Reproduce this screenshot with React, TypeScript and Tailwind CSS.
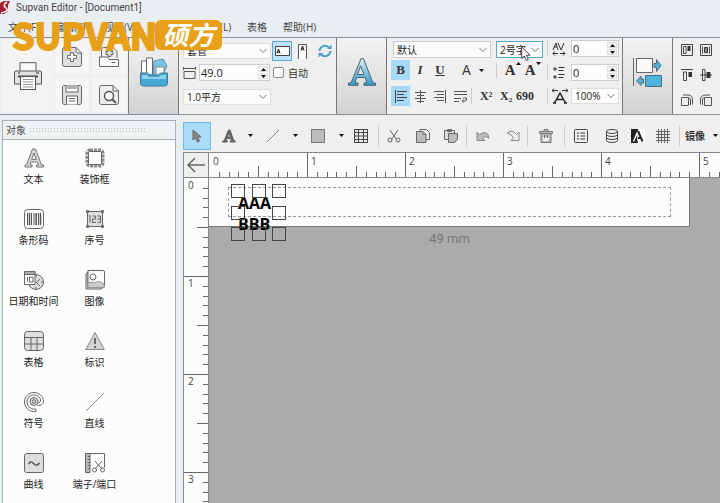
import type { ReactNode } from "react";

type IconProps = { children: ReactNode; box?: string; className?: string };

const Icon = ({ children, box = "0 0 20 20", className = "size-5" }: IconProps) => (
  <svg viewBox={box} fill="none" stroke="#666" className={`shrink-0 ${className}`} aria-hidden="true">
    {children}
  </svg>
);

const Chevron = () => (
  <svg viewBox="0 0 8 5" fill="none" stroke="#777" className="pointer-events-none absolute right-1 top-1/2 h-[5px] w-2 -translate-y-1/2">
    <path d="M.5 .5 4 4 7.500 .5" />
  </svg>
);

const Caret = () => (
  <svg viewBox="0 0 5 3" fill="#111" className="h-[3px] w-[5px] shrink-0">
    <path d="M0 0h5L2.500 3z" />
  </svg>
);

const CaretUp = () => (
  <svg viewBox="0 0 5 3" fill="#111" className="h-[3px] w-[5px] shrink-0">
    <path d="M0 3h5L2.500 0z" />
  </svg>
);

type SelectProps = { label: string; value: string; className: string };

const Select = ({ label, value, className }: SelectProps) => (
  <div className={`relative shrink-0 ${className}`}>
    <select aria-label={label} className="block h-full w-full appearance-none border border-inherit bg-[#fcfcfc] pl-[3px] text-[10px] leading-3 text-[#222]">
      <option>{value}</option>
    </select>
    <Chevron />
  </div>
);

type SpinProps = { label: string; value: string; className: string };

const Spin = ({ label, value, className }: SpinProps) => (
  <div className={`flex h-[17px] shrink-0 border border-[#ccc] bg-[#fcfcfc] ${className}`}>
    <input aria-label={label} defaultValue={value} className="min-w-0 flex-1 bg-transparent pl-px text-[11px] leading-3 text-[#222]" />
    <div className="flex w-3 flex-col gap-px p-px">
      <button aria-label={`${label} +`} className="flex flex-1 items-center justify-center border border-[#ddd] bg-[#f2f2f2]">
        <CaretUp />
      </button>
      <button aria-label={`${label} -`} className="flex flex-1 items-center justify-center border border-[#ddd] bg-[#f2f2f2]">
        <Caret />
      </button>
    </div>
  </div>
);

const objects: { name: string; icon: ReactNode }[] = [
  {
    name: "文本",
    icon: <path d="M8.500 1h3l6 16h2v2h-7v-2h2l-1-3H7l-1 3h2v2H1v-2h1.500zM10 5l-2.300 6.500h4.500z" fill="#d4d4d4" stroke="#777" />,
  },
  {
    name: "装饰框",
    icon: (
      <>
        <rect x="2" y="2" width="16" height="16" rx="3" strokeWidth="3" strokeDasharray="3 1" stroke="#888" />
        <rect x="3.500" y="3.500" width="13" height="13" rx="1" fill="#fcfcfc" />
      </>
    ),
  },
  {
    name: "条形码",
    icon: (
      <>
        <rect x=".5" y=".5" width="19" height="19" rx="3" />
        <path d="M3.500 4v12M7.500 4v12M10 4v12M14.500 4v12" stroke="#555" />
        <path d="M5.500 4v12M12.200 4v12M16.500 4v12" strokeWidth="1.500" stroke="#555" />
      </>
    ),
  },
  {
    name: "序号",
    icon: (
      <>
        <path d="M2.500 2.500h15v15h-15z" fill="#ddd" />
        <path d="M1 1h3v3H1zM16 1h3v3h-3zM1 16h3v3H1zM16 16h3v3h-3z" fill="#777" stroke="none" />
        <path d="M4 7l1-.5v7M7.500 7h3v3h-3v3.500h3.500M12.500 7h3v6.500h-3M12.500 10h3" />
      </>
    ),
  },
  {
    name: "日期和时间",
    icon: (
      <>
        <circle cx="12" cy="12" r="7.500" fill="#ddd" />
        <path d="M12 5v2M19 12h-2M12 19v-2M12 13l4-4M12 12l4 4" />
        <path d="M.5 2.500h10.500v12H.5z" fill="#fcfcfc" />
        <path d="M.5 1.500h10.500v3H.5z" fill="#aaa" />
        <path d="M3.500 7v5M5.500 7h3.500v5H5.500z" />
      </>
    ),
  },
  {
    name: "图像",
    icon: (
      <>
        <path d="M3 1.500L1 4v15h15l2-1.500H3z" fill="#ddd" />
        <path d="M3 .5h15q1.500 0 1.500 1.500v14q0 1.500-1.500 1.500H3z" fill="#fcfcfc" />
        <path d="M3 13q3-2 6 0 5-3 10 1v3.500H3z" fill="#ccc" stroke="#999" />
        <circle cx="8" cy="7" r="3" />
      </>
    ),
  },
  {
    name: "表格",
    icon: (
      <>
        <rect x=".5" y=".5" width="19" height="19" rx="3" fill="#ddd" />
        <path d="M.5 6.500h19M.5 13h19M7 6.500v13M13 6.500v13" />
      </>
    ),
  },
  {
    name: "标识",
    icon: (
      <>
        <path d="M10 1.500 19.300 18.500H.7z" fill="#d4d4d4" stroke="#888" />
        <path d="M10 7v6M10 15v2" strokeWidth="1.500" stroke="#444" />
      </>
    ),
  },
  {
    name: "符号",
    icon: (
      <>
        <path
          d="M12 19.500C6 20.500.5 16 .5 10 .5 4.500 5 .5 10 .5s9.500 4 9.500 8.500c0 4-5 6-7 3.500 M12 17c-4 .8-9-2-9-7 0-4 3-7 7-7s7 3 6.500 6c0 1.500-2 2-2 .5M12 17v2.500"
        />
        <circle cx="10" cy="9.500" r="4" fill="#ddd" />
        <circle cx="10" cy="9.500" r="1.800" />
      </>
    ),
  },
  { name: "直线", icon: <path d="M1 19 19 1" stroke="#888" /> },
  {
    name: "曲线",
    icon: (
      <>
        <rect x=".5" y=".5" width="19" height="19" rx="2" fill="#ddd" />
        <path d="M4.500 11c2-3 3.500-2 5-.5s3.500 3 6-.5" strokeWidth="1.500" stroke="#555" />
      </>
    ),
  },
  {
    name: "端子/端口",
    icon: (
      <>
        <path d="M.5 .5h4.500v19H.5z" fill="#bbb" />
        <path d="M2.500 3.500H5M2.500 6.500H5M2.500 9.500H5M2.500 12.500H5M2.500 15.500H5M5 .5h14.500v14M10 8l6.500 7.500M17 8l-6.500 7.500" />
        <circle cx="9.500" cy="17" r="2" />
        <circle cx="17.500" cy="17" r="2" />
      </>
    ),
  },
];

const fileButtons: { name: string; icon: ReactNode }[] = [
  {
    name: "新建",
    icon: (
      <>
        <path d="M3 .5h11l5.500 5.500v11.500q0 2-2 2H2.500q-2 0-2-2V2.500q0-2 2-2zM14 .5v3.500q0 2 2 2h3.500" fill="#ddd" />
        <path d="M8.500 5.500h3v3h3v3h-3v3h-3v-3h-3v-3h3z" fill="#fff" />
      </>
    ),
  },
  {
    name: "打开",
    icon: (
      <>
        <path d="M2.500 10V2.500q0-2 2-2H14l4 4V11" fill="#eee" />
        <path d="M.5 10h8l1.500 2.500h9.500v7H.5z" fill="#fafafa" />
        <path d="M9 2.500h3v2h2v3h-2v2H9v-2H7v-3h2zM12.500 15.500h4" fill="#ddd" />
      </>
    ),
  },
  {
    name: "保存",
    icon: (
      <>
        <path d="M1.500 .5h17l1 1v16q0 2-2 2h-15q-2 0-2-2v-16z" fill="#ddd" />
        <path d="M4 .5V7h12V.5M4.500 19.500V11h11v8.500" fill="#fafafa" />
        <path d="M6 1v3M8 1v3M10 1v3M12 1v3M14 1v3M7 13.500h6M7 16h6" />
      </>
    ),
  },
  {
    name: "预览",
    icon: (
      <>
        <path d="M3 .5h11l5.500 5.500v11.500q0 2-2 2H2.500q-2 0-2-2V2.500q0-2 2-2zM14 .5V6h5.500" fill="#eee" />
        <circle cx="10" cy="11" r="4.500" fill="#fcfcfc" strokeWidth="1.500" stroke="#555" />
        <path d="M13.500 14.500 17 18" strokeWidth="2" stroke="#555" />
      </>
    ),
  },
];

const alignIcons: { name: string; icon: ReactNode }[] = [
  {
    name: "顶部对齐",
    icon: (
      <>
        <path d="M.5 .5h11v11H.5zM2.500 2.500h2.500v7H2.500z" stroke="#444" />
        <path d="M6.500 2h3v5h-3z" fill="#333" stroke="none" />
      </>
    ),
  },
  {
    name: "居中对齐",
    icon: (
      <>
        <path d="M.5 .5h11v11H.5zM2.500 2.500v7M9.500 2.500v7" stroke="#444" />
        <path d="M4.500 3.500h3v5h-3z" fill="#888" stroke="#333" />
      </>
    ),
  },
  {
    name: "上边对齐",
    icon: (
      <>
        <path d="M0 .5h12M2.500 3h3v8.500h-3z" stroke="#444" />
        <path d="M7.500 3H11v5H7.500z" fill="#333" stroke="none" />
      </>
    ),
  },
  {
    name: "中线对齐",
    icon: (
      <>
        <path d="M0 6h12M2.500 .5h2.500v11H2.500z" fill="#efefef" stroke="#444" />
        <path d="M6.500 3h4v6h-4z" fill="#333" stroke="none" />
      </>
    ),
  },
  { name: "左旋转", icon: <path d="M.5 3.500h7v8h-7zM2 1h5q4.500 0 4.500 5v4.500M7.500 3.500l2 1.500v6" stroke="#555" /> },
  { name: "右旋转", icon: <path d="M4.500 3.500h7v8h-7zM10 1H6Q.5 1 .5 6v4.500M4.500 3.500l-2 1.500v6" stroke="#555" /> },
];

const Ribbon = () => (
  <section className="flex h-[78px] shrink-0 items-stretch overflow-hidden border-y border-[#8d8f91] bg-[#efefef]">
    <div className="flex w-[129px] shrink-0 gap-[2px] border-r border-[#777] px-[2px] pb-[2px] pt-px">
      <button aria-label="打印" className="flex w-[51px] items-center justify-center bg-[#f3f3f3]">
        <Icon box="0 0 28 28" className="size-7">
          <path d="M6 9V.7h16V9" fill="#fafafa" stroke="#555" />
          <path d="M2 9h24q1.500 0 1.500 2v11h-27V11Q.5 9 2 9z" fill="#e3e3e3" stroke="#555" />
          <path d="M4 14.500h20" stroke="#444" strokeWidth="2" />
          <path d="M6.500 14.500h15v13h-15z" fill="#fcfcfc" stroke="#555" />
          <path d="M9 17.500h10M9 20h10M9 22.500h10M9 25h10" stroke="#999" />
          <path d="M4 11h2M22 11h3" stroke="#333" />
        </Icon>
      </button>
      <div className="grid flex-1 grid-cols-2 gap-[3px]">
        {fileButtons.map((b) => (
          <button key={b.name} aria-label={b.name} className="flex items-center justify-center bg-[#f5f5f5]">
            <Icon>{b.icon}</Icon>
          </button>
        ))}
      </div>
    </div>

    <button aria-label="素材" className="flex w-[50px] shrink-0 items-center justify-center border-r border-[#777] bg-linear-to-b from-[#f3f3f3] to-[#d2d2d2] pb-2">
      <Icon box="0 0 28 30" className="h-[30px] w-7">
        <path d="M14 4 23 2l4 7-4 8H13z" fill="#7cc3e0" stroke="#5b94ad" />
        <path d="M1.500 4h5v14h-5zM6.500 1h6v17h-6z" fill="#fcfcfc" />
        <path d="M16 10h8v8h-8z" fill="#fcfcfc" stroke="#888" />
        <path d="M.5 16h7l2 2h9l2-2h7v10q0 3-3 3h-21q-3 0-3-3z" fill="#47a9d3" stroke="#397fa0" />
        <path d="M2 18h5l2 2h10l2-2h5v4H2z" fill="#8fd0ea" stroke="none" />
      </Icon>
    </button>

    <div className="flex w-[158px] shrink-0 flex-col gap-[3px] border-r border-[#777] pl-1 pt-[3px]">
      <div className="flex items-center">
        <Select label="套管" value="套管" className="mr-px h-4 w-[88px] border-[#ddd]" />
        <button aria-label="横向" className="flex size-5 items-center justify-center border border-[#5aa9dc] bg-[#bfe2fa]">
          <Icon box="0 0 15 10" className="h-[10px] w-[15px]">
            <path d="M.5 .5h14v9H.5z" fill="#fcfcfc" stroke="#444" />
            <path d="M2 7.500 3.500 3 5 7.500M2.500 6h2" stroke="#111" />
          </Icon>
        </button>
        <button aria-label="纵向" className="flex size-5 items-center justify-center">
          <Icon box="0 0 9 15" className="h-[15px] w-[9px]">
            <path d="M.5 15V.5h8V15" fill="#fcfcfc" stroke="#555" />
            <path d="M3 6.500 4.500 2 6 6.500M3.500 5h2" stroke="#111" />
          </Icon>
        </button>
        <button aria-label="刷新" className="ml-[3px] flex size-5 items-center justify-center">
          <Icon box="0 0 14 14" className="size-[14px]">
            <path d="M1.500 7A5.500 5.500 0 0 1 11 3.500M12.500 7A5.500 5.500 0 0 1 3 10.500" stroke="#4a9fc8" strokeWidth="2" />
            <path d="M9 5h4.500V.5zM5 9H.5v4.500z" fill="#4a9fc8" stroke="none" />
          </Icon>
        </button>
      </div>
      <div className="flex items-center gap-[3px]">
        <Icon box="0 0 13 12" className="h-3 w-[13px]">
          <path d="M1 4.500h11v7H1zM.5 0v3M12.500 0v3M1 1.500h11" stroke="#555" />
        </Icon>
        <Spin label="长度" value="49.0" className="w-[71px]" />
        <label className="flex items-center gap-1 text-[10px] leading-3">
          <input type="checkbox" className="size-[11px] appearance-none rounded-[2px] border border-[#888] bg-[#fcfcfc]" />
          自动
        </label>
      </div>
      <Select label="线径" value="1.0平方" className="mt-[5px] h-4 w-[88px] border-[#ddd]" />
    </div>

    <button aria-label="字体" className="flex w-[50px] shrink-0 items-center justify-center border-r border-[#777] bg-linear-to-b from-[#f3f3f3] to-[#d2d2d2] pb-2">
      <Icon box="0 0 28 28" className="size-7">
        <defs>
          <linearGradient id="letter" x1="0" y1="0" x2="0" y2="1">
            <stop offset="0" stopColor="#d5eef8" />
            <stop offset="1" stopColor="#2f9ccb" />
          </linearGradient>
        </defs>
        <path d="M13 .7h2.500L25 25h2.500v2.300H16V25h3l-2-5.500H8.500L7 25h3v2.300H.5V25H3zM12.500 8 9.500 16.500h6.500z" fill="url(#letter)" stroke="#4b6470" />
      </Icon>
    </button>

    <div className="flex w-[160px] shrink-0 flex-col gap-[2px] pl-1 pt-[3px]">
      <div className="flex gap-[5px] pl-[2px]">
        <Select label="字体名称" value="默认" className="h-[17px] w-[98px] border-[#ccc]" />
        <Select label="字号" value="2号字" className="h-[17px] w-[47px] border-[#55a7d5]" />
      </div>
      <div className="flex items-center font-['Liberation_Serif',serif] text-[13px] font-bold leading-4 text-[#333]">
        <button className="h-5 w-[19px] bg-[#a9d9f8]">B</button>
        <button className="w-5 italic">I</button>
        <button className="w-5 underline">U</button>
        <button className="ml-3 flex items-center gap-2 font-['Open_Sans',sans-serif] text-[14px] font-normal">
          A
          <Caret />
        </button>
        <span className="ml-3 h-4 w-px bg-[#ccc]" />
        <button aria-label="增大字号" className="ml-2 flex items-start text-[15px]">
          A
          <CaretUp />
        </button>
        <button aria-label="减小字号" className="ml-1 flex items-start text-[15px]">
          A
          <Caret />
        </button>
      </div>
      <div className="mt-1 flex items-center font-['Liberation_Serif',serif] text-[12px] font-bold leading-4 text-[#333]">
        <button aria-label="左对齐" className="flex h-5 w-[19px] items-center justify-center bg-[#a9d9f8]">
          <Icon box="0 0 13 13" className="size-[13px]">
            <path d="M1.500 0v13M3 1.500h10M3 4.500h7M3 7.500h10M3 10.500h7" stroke="#444" />
          </Icon>
        </button>
        <button aria-label="居中" className="flex w-5 justify-center">
          <Icon box="0 0 13 13" className="size-[13px]">
            <path d="M6.500 0v13M1 2.500h11M3 5.500h7M1 8.500h11M3 11.500h7" stroke="#555" />
          </Icon>
        </button>
        <button aria-label="右对齐" className="flex w-5 justify-center">
          <Icon box="0 0 13 13" className="size-[13px]">
            <path d="M11.500 0v13M0 1.500h10M3 4.500h7M0 7.500h10M3 10.500h7" stroke="#555" />
          </Icon>
        </button>
        <button aria-label="换行" className="flex w-5 justify-center">
          <Icon box="0 0 13 13" className="size-[13px]">
            <path d="M0 1.500h13M0 4.500h13M0 8.500h7M0 11.500h5M8 11h3q2 0 1.500-3H9M9.500 9.500 8 11l1.500 1.500" stroke="#555" />
          </Icon>
        </button>
        <span className="ml-px h-4 w-px bg-[#ccc]" />
        <button className="ml-2 w-3 text-left">X²</button>
        <button className="ml-2 w-3 text-left">X₂</button>
        <button className="ml-1">690</button>
      </div>
    </div>

    <div className="flex w-[76px] shrink-0 flex-col gap-[7px] border-r border-[#777] pt-[2px]">
      <div className="flex items-center justify-between border-l border-[#ccc] pl-1 pr-[3px]">
        <Icon box="0 0 14 14" className="size-[14px]">
          <path d="M1 8 4 1l2 7M2 5h3M6 1l3 7 3-7M1 11.500h5M8 11.500h5M3 9.500l-2 2 2 2M11 9.500l2 2-2 2" stroke="#333" />
        </Icon>
        <Spin label="字间距" value="0" className="w-12" />
      </div>
      <div className="flex items-center justify-between border-l border-[#ccc] pl-1 pr-[3px]">
        <Icon box="0 0 14 14" className="size-[14px]">
          <path d="M3 1v4M1 3h4M3 9v4M1 11h4M6.500 1.500h6M6.500 4.500h5M6.500 8.500h6M6.500 11.500h5" stroke="#333" />
        </Icon>
        <Spin label="行间距" value="0" className="w-12" />
      </div>
      <div className="flex items-center justify-between border-l border-[#ccc] pl-1 pr-[3px]">
        <Icon box="0 0 16 16" className="size-4">
          <path d="M0 2.500h6M10 2.500h6M2 .5l-2 2 2 2M14 .5l2 2-2 2" stroke="#333" />
          <path d="M1 15h3M12 15h3M2.500 15 8 5l5.500 10M5 11.500h6" stroke="#222" strokeWidth="1.500" />
        </Icon>
        <Select label="缩放" value="100%" className="h-4 w-12 border-[#ddd]" />
      </div>
    </div>

    <button aria-label="交换" className="flex w-[50px] shrink-0 items-center justify-center border-r border-[#777] bg-linear-to-b from-[#f3f3f3] to-[#d2d2d2] pb-2">
      <Icon box="0 0 29 30" className="h-[30px] w-[29px]">
        <path d="M.5 1v28" />
        <path d="M3.500 1.500h16v14h-16z" fill="#fafafa" />
        <path d="M12.500 18.500h16v11h-16z" fill="#4db2dc" stroke="#456d7e" />
        <path d="M21 6.500h2.500v-4l4.500 6-4.500 6v-4H21zM10.500 22H8v-3l-4.500 5L8 28.500V26h2.500z" fill="#55b3da" stroke="#456d7e" />
      </Icon>
    </button>

    <div className="grid shrink-0 grid-cols-[12px_12px] content-around gap-x-[7px] pb-[2px] pl-2">
      {alignIcons.map((a) => (
        <button key={a.name} aria-label={a.name}>
          <Icon box="0 0 12 12" className="size-3">{a.icon}</Icon>
        </button>
      ))}
    </div>
  </section>
);

const Divider = () => <span className="h-[22px] w-px shrink-0 bg-[#ccc]" />;

type ToolProps = { name: string; children: ReactNode; className?: string };

const Tool = ({ name, children, className = "w-7" }: ToolProps) => (
  <button aria-label={name} className={`flex h-7 shrink-0 items-center justify-center ${className}`}>
    <Icon box="0 0 14 14" className="size-[14px]">{children}</Icon>
  </button>
);

const ToolMenu = ({ name }: { name: string }) => (
  <button aria-label={name} className="flex h-7 w-[6px] shrink-0 items-center justify-center">
    <Caret />
  </button>
);

const Toolbar = () => (
  <div className="flex h-[35px] shrink-0 items-center overflow-hidden bg-[#efefef] pt-[2px]">
    <Tool name="选择" className="w-7 border border-[#6dbce9] bg-[#addcfa]">
      <path d="M3 1v10l2.500-2 2 4 2-1-2-4H11z" fill="#888" />
    </Tool>
    <Tool name="文本" className="w-9">
      <path d="M6.500 1h1.500l4 11h1.500v1H8v-1h1.500l-.8-2.500H5L4 12h1.500v1H.5v-1H2zM6.800 4 5.500 8h3z" fill="#666" />
    </Tool>
    <ToolMenu name="文本选项" />
    <Tool name="直线" className="w-[39px]"><path d="M1 13 13 1" stroke="#888" /></Tool>
    <ToolMenu name="直线选项" />
    <Tool name="矩形" className="w-10"><path d="M.5 .5h13v13H.5z" fill="#bbb" stroke="#777" /></Tool>
    <ToolMenu name="矩形选项" />
    <Tool name="表格" className="w-[34px]">
      <path d="M.5 .5h13v13H.5zM4.500 .5v13M9.500 .5v13M.5 3.500h13M.5 7h13M.5 10.500h13" stroke="#444" />
    </Tool>
    <Divider />
    <Tool name="剪切" className="w-[30px]">
      <path d="m3 1 6.500 9.500M11 1 4.500 10.500" />
      <circle cx="3" cy="11" r="2" />
      <circle cx="11" cy="11" r="2" />
    </Tool>
    <Tool name="复制">
      <path d="M4 .5h6.500l3 3v7H4z" fill="#eee" />
      <path d="M.5 2.500H7l3 3v8H.5zM7 2.500v3h3" fill="#bbb" />
    </Tool>
    <Tool name="粘贴">
      <path d="M.5 1.500h10v9H.5zM3.500 .5h4v2h-4z" fill="#ddd" />
      <path d="M4.500 4.500h9v6l-3 3h-6z" fill="#bbb" />
    </Tool>
    <span className="w-px shrink-0" />
    <Divider />
    <Tool name="撤销" className="w-8">
      <path d="M1 3v8.500h8L6.500 9Q9 6 13 9.500 12 0 3.500 5.500z" fill="#bbb" stroke="#888" />
    </Tool>
    <Tool name="重做">
      <path d="M13 3v8.500H5L7.500 9Q6 5 1 4 6 0 10.500 5.500z" fill="#eee" stroke="#888" />
    </Tool>
    <Divider />
    <Tool name="删除" className="w-9">
      <path d="M.5 2.500h13v2H.5zM5 .5h4v2H5zM2 4.500h10v9H2z" fill="#bbb" stroke="#777" />
      <path d="M4 8h6v4H4z" fill="#eee" stroke="none" />
      <path d="M5.500 6v3M8.500 6v3" />
    </Tool>
    <Divider />
    <Tool name="属性" className="w-8">
      <rect x=".5" y=".5" width="13" height="13" rx="1" stroke="#444" />
      <path d="M3 4h2M3 7h2M3 10h2M6.500 4H11M6.500 7H11M6.500 10H11" stroke="#333" />
    </Tool>
    <Tool name="数据库" className="w-[30px]">
      <path d="M1.500 2.500v9q0 2 5.500 2t5.500-2v-9M1.500 5.500q0 2 5.500 2t5.500-2M1.500 8.500q0 2 5.500 2t5.500-2" stroke="#444" />
      <ellipse cx="7" cy="2.500" rx="5.500" ry="2" stroke="#444" />
    </Tool>
    <Tool name="反色" className="w-[22px]">
      <path d="M7 0h7v14H7z" fill="#fff" stroke="none" />
      <path d="M0 0h7v14H0z" fill="#222" stroke="none" />
      <path d="M2.500 12.500 7 2v10.500" stroke="#fff" strokeWidth="1.500" />
      <path d="M7 2l4.500 10.500M7 9h3" stroke="#222" strokeWidth="2" />
    </Tool>
    <Tool name="网格" className="mr-[2px] w-7">
      <path d="M2.500 0v14M5.500 0v14M8.500 0v14M11.500 0v14M0 2.500h14M0 5.500h14M0 8.500h14M0 11.500h14" />
    </Tool>
    <Divider />
    <button className="ml-[5px] flex shrink-0 items-center gap-2 text-[10px] font-bold leading-3 text-[#333]">
      镜像
      <Caret />
    </button>
  </div>
);

const ticks = [0, 1, 2, 3, 4, 5, 6, 7, 8, 9];

const RulerX = () => (
  <div className="flex min-w-0 flex-1 overflow-hidden border-b border-[#888] bg-[#fcfcfc]">
    {[0, 1, 2, 3, 4, 5].map((n) => (
      <div key={n} className="relative flex w-[98px] shrink-0 items-end">
        {ticks.map((t) => (
          <span
            key={t}
            className={`flex-1 border-l border-[#666] ${t === 0 ? (n === 0 ? "h-0" : "h-6") : t === 5 ? "h-[11px]" : "h-[5px]"}`}
          />
        ))}
        <span className="absolute left-1 top-[2px] text-[10px] leading-3 text-[#444]">{n}</span>
      </div>
    ))}
  </div>
);

const RulerY = () => (
  <div className="flex w-[26px] shrink-0 flex-col overflow-hidden border-x border-[#888] bg-[#fcfcfc]">
    {[0, 1, 2, 3].map((n) => (
      <div key={n} className="relative flex h-[98px] shrink-0 flex-col items-end">
        {ticks.map((t) => (
          <span
            key={t}
            className={`flex-1 border-t border-[#666] ${t === 0 ? (n === 0 ? "w-0" : "w-6") : t === 5 ? "w-[11px]" : "w-[5px]"}`}
          />
        ))}
        <span className="absolute left-1 top-px text-[10px] leading-3 text-[#444]">{n}</span>
      </div>
    ))}
  </div>
);

const handles = [
  "left-[22px] top-[6px]",
  "left-[43px] top-[6px]",
  "left-[63px] top-[6px]",
  "left-[22px] top-[28px]",
  "left-[63px] top-[28px]",
  "left-[22px] top-[49px]",
  "left-[43px] top-[49px]",
  "left-[63px] top-[49px]",
];

const Canvas = () => (
  <div className="relative min-w-0 flex-1 overflow-hidden bg-[#ababab]">
    <div className="h-[49px] w-[481px] border-b border-r border-[#777] bg-[#fcfcfc] pb-[9px] pl-[19px] pr-[18px] pt-[9px]">
      <div className="h-full border border-dashed border-[#999]" />
    </div>
    <p className="w-[481px] pt-[3px] text-center font-['Roboto',sans-serif] text-[13px] leading-[18px] text-[#777]">49 mm</p>
    <div className="absolute left-[29px] top-[15px] font-['Open_Sans',sans-serif] text-[16px] font-bold leading-[21px] text-black">
      AAA
      <br />
      BBB
    </div>
    {handles.map((h) => (
      <span key={h} className={`absolute size-[14px] border border-[#444] ${h}`} />
    ))}
  </div>
);

const ObjectPanel = () => (
  <aside className="ml-[2px] mt-[5px] flex w-[174px] shrink-0 flex-col border border-b-0 border-[#a9b0b5]">
    <h2 className="flex h-[19px] shrink-0 items-center gap-[3px] border-b border-[#a9b0b5] bg-[#eef2f3] pl-[3px] text-[10px] leading-3 text-[#444]">
      对象
      <span className="h-[6px] w-[116px] bg-[radial-gradient(#bbb_1px,transparent_1px)] bg-[size:3px_3px]" />
    </h2>
    <div className="grid min-h-0 flex-1 auto-rows-[61px] grid-cols-[61px_61px] content-start overflow-hidden bg-[#fcfcfc] pt-[6px]">
      {objects.map((o) => (
        <button key={o.name} className="flex flex-col items-center gap-[5px] pt-[2px] text-[10px] leading-3 text-[#222]">
          <Icon>{o.icon}</Icon>
          <span className="whitespace-nowrap">{o.name}</span>
        </button>
      ))}
    </div>
  </aside>
);

const App = () => {
  return (
    <div className="relative flex h-screen flex-col overflow-hidden bg-[#e9eef1] font-['Open_Sans','Noto_Sans_CJK_SC',sans-serif] text-[#333]">
      <header className="flex h-4 shrink-0 items-center gap-[5px] text-[10px] leading-4 text-[#444]">
        <Icon box="0 0 11 14" className="h-[14px] w-[11px]">
          <path d="M0 2 4 0h6L8 4v6l-4 3H0z" fill="#a71d2e" stroke="none" />
          <path d="M7 1Q2 4 6 7t-5 5" stroke="#fff" strokeWidth="1.500" />
        </Icon>
        <h1 className="font-['Roboto',sans-serif]">Supvan Editor - [Document1]</h1>
      </header>
      <nav className="flex h-[21px] shrink-0 items-center text-[10px] leading-3 text-[#444]">
        <button className="w-[46px] whitespace-nowrap pl-2 text-left">文件(F)</button>
        <button className="w-[58px] whitespace-nowrap pl-2 text-left">编辑(E)</button>
        <button className="w-12 whitespace-nowrap text-left">视图(V)</button>
        <button className="w-12 whitespace-nowrap text-left">插入(I)</button>
        <button className="w-[47px] whitespace-nowrap text-left">布局(L)</button>
        <button className="w-9 whitespace-nowrap text-left">表格</button>
        <button className="whitespace-nowrap">帮助(H)</button>
      </nav>
      <Ribbon />
      <main className="flex min-h-0 flex-1">
        <ObjectPanel />
        <div className="ml-[7px] flex min-w-0 flex-1 flex-col pt-[2px]">
          <Toolbar />
          <div className="flex h-[26px] shrink-0 border-t border-[#888]">
            <div className="flex w-[26px] shrink-0 items-center justify-center border border-t-0 border-[#888] bg-[#efefef]">
              <Icon box="0 0 18 16" className="h-4 w-[18px]">
                <path d="M18 8H1M8 1 1 8l7 7" strokeWidth="1.500" />
              </Icon>
            </div>
            <RulerX />
          </div>
          <div className="flex min-h-0 flex-1">
            <RulerY />
            <Canvas />
          </div>
        </div>
      </main>

      <div className="absolute left-3 top-5 flex text-[#e7a017]">
        <strong className="w-[143px] font-['Noto_Sans_CJK_SC',sans-serif] text-[36px] font-bold leading-[28px] [-webkit-text-stroke:2px_#e7a017]">
          SUPVAN
        </strong>
        <span className="flex h-[30px] w-[67px] items-center justify-center rounded-md bg-[#e7a017] text-[26px] font-bold italic leading-[30px] text-white">
          硕方
        </span>
      </div>

      <svg viewBox="0 0 10 16" className="absolute left-[521px] top-[46px] h-4 w-[10px]" fill="#fff" stroke="#444">
        <path d="M.7 1v11.500l2.600-2.500 2 4.500 2-1-2-4.300h3.800z" />
      </svg>
    </div>
  );
};

export default App;
